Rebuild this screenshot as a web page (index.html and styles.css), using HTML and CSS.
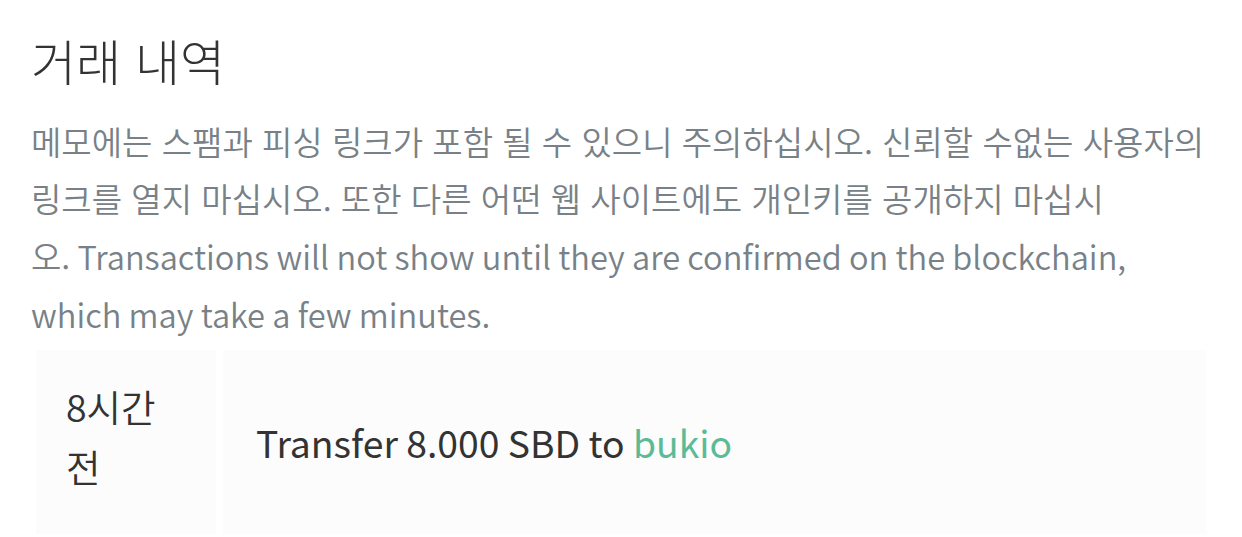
FILE: index.html
```html
<!DOCTYPE html>
<html lang="ko">
<head>
<meta charset="utf-8">
<link rel="stylesheet" href="styles.css">
</head>
<body>
<main class="history">
  <h1 class="history-title">거래 내역</h1>
  <p class="history-note">메모에는 스팸과 피싱 링크가 포함 될 수 있으니 주의하십시오. 신뢰할 수없는 사용자의<br>링크를 열지 마십시오. 또한 다른 어떤 웹 사이트에도 개인키를 공개하지 마십시<br>오.<span class="latin" lang="en"> Transactions will not show until they are confirmed on the blockchain,<br>which may take a few minutes.</span></p>
  <table class="tx-table">
    <tbody>
      <tr>
        <td class="tx-time">8시간 전</td>
        <td class="tx-desc" lang="en">Transfer 8.000 SBD to <a class="tx-link" href="#">bukio</a></td>
      </tr>
    </tbody>
  </table>
</main>
</body>
</html>
```

FILE: styles.css
```css
html, body {
  margin: 0;
  padding: 0;
  background: #ffffff;
}

body {
  font-family: "Noto Sans CJK KR", "Noto Sans", sans-serif;
}

.history {
  padding: 30px 29px 0 31px;
}

.history-title {
  margin: 0;
  font-size: 49px;
  font-weight: 300;
  line-height: 59px;
  color: #333333;
}

.history-note {
  margin: 24px 0 0;
  font-size: 33px;
  font-weight: 350;
  line-height: 57px;
  color: #788187;
  white-space: nowrap;
}

.latin {
  font-size: 32.6px;
}

.tx-table {
  border-collapse: separate;
  border-spacing: 7px;
  table-layout: fixed;
  margin-left: -2px;
  width: calc(100% + 2px);
}

.tx-table td {
  box-sizing: border-box;
  background: #fcfcfc;
  color: #333333;
  line-height: 60px;
}

.tx-time {
  width: 180px;
  padding: 26px 40px 38px 30px;
  font-size: 37.5px;
  font-weight: 350;
  vertical-align: top;
}

.tx-desc {
  padding: 0 30px 0 33px;
  font-size: 37.3px;
  font-weight: 400;
  vertical-align: middle;
}

.tx-link {
  color: #5bbb96;
  text-decoration: none;
}
```
